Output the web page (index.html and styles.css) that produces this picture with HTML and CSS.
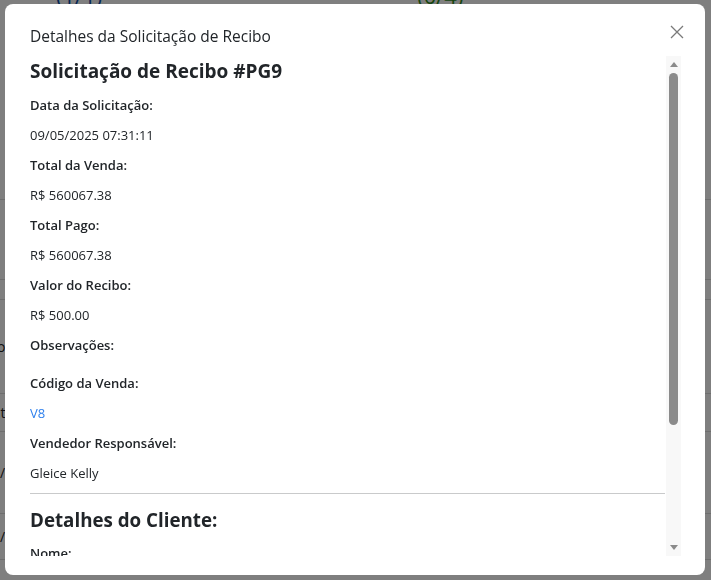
FILE: index.html
```html
<!DOCTYPE html>
<html lang="pt-BR">
<head>
<meta charset="utf-8">
<title>Detalhes da Solicitação de Recibo</title>
<link rel="stylesheet" href="styles.css">
</head>
<body>
<div class="page">
  <div class="stats">
    <span class="stat stat-blue">(1/1)</span>
    <span class="stat stat-green">(0/4)</span>
  </div>
  <div class="table">
    <div class="row h1"></div>
    <div class="row h2"></div>
    <div class="row h3"></div>
    <div class="row h4"><span class="frag frag-o">o</span></div>
    <div class="row h5"><span class="frag frag-nt">nt</span></div>
    <div class="row h6"><span class="frag">/</span></div>
    <div class="row h7"><span class="frag">/</span></div>
  </div>
</div>

<div class="backdrop">
  <div class="modal">
    <div class="modal-header">
      <h5 class="modal-title">Detalhes da Solicitação de Recibo</h5>
      <button class="close" type="button" aria-label="Fechar">
        <svg width="14" height="14" viewBox="0 0 14 14"><path d="M1 1L13 13M13 1L1 13" stroke="#7a7a7a" stroke-width="1.3" fill="none"/></svg>
      </button>
    </div>
    <div class="modal-body">
      <div class="content">
        <h4 class="req-title">Solicitação de Recibo #PG9</h4>
        <p class="label">Data da Solicitação:</p>
        <p class="value">09/05/2025 07:31:11</p>
        <p class="label">Total da Venda:</p>
        <p class="value">R$ 560067.38</p>
        <p class="label">Total Pago:</p>
        <p class="value">R$ 560067.38</p>
        <p class="label">Valor do Recibo:</p>
        <p class="value">R$ 500.00</p>
        <p class="label">Observações:</p>
        <p class="value empty"></p>
        <p class="label">Código da Venda:</p>
        <p class="value"><a class="link" href="#">V8</a></p>
        <p class="label">Vendedor Responsável:</p>
        <p class="value">Gleice Kelly</p>
        <hr class="divider">
        <h4 class="section-title">Detalhes do Cliente:</h4>
        <p class="label">Nome:</p>
        <p class="value">Cliente</p>
      </div>
      <div class="scrollbar">
        <span class="arrow-box"><span class="arrow up"></span></span>
        <span class="thumb"></span>
        <span class="track-rest"></span>
        <span class="arrow-box"><span class="arrow down"></span></span>
      </div>
    </div>
  </div>
</div>
</body>
</html>
```

FILE: styles.css
```css
* { box-sizing: border-box; }

html, body {
  margin: 0;
  height: 100%;
}

body {
  font-family: "Open Sans", "Noto Sans", sans-serif;
  color: #212529;
  background: #ffffff;
  overflow: hidden;
}

/* background page (behind the backdrop) */
.page {
  height: 580px;
  overflow: hidden;
}

.stats {
  display: flex;
  height: 14px;
  margin-top: -12px;
  font-size: 22px;
  line-height: 14px;
}

.stat-blue {
  color: #0d4fa8;
  margin-left: 56px;
}

.stat-green {
  color: #2e8b1e;
  margin-left: 315px;
}

.table {
  display: flex;
  flex-direction: column;
  margin-top: 168px;
  font-size: 14px;
}

.row {
  border-bottom: 1px solid #dcdcdc;
  display: flex;
  align-items: center;
}

.h1 { height: 30px; }
.h2 { height: 80px; }
.h3 { height: 20px; }
.h4 { height: 94px; }
.h5 { height: 38px; }
.h6 { height: 82px; }
.h7 { height: 46px; }

.frag {
  color: #222;
  margin-left: 0;
}

.frag-o { margin-left: -3px; }
.frag-nt { margin-left: -8px; }

/* modal */
.backdrop {
  position: fixed;
  inset: 0;
  background: rgba(0, 0, 0, 0.5);
  display: flex;
  align-items: flex-start;
  padding: 4px 6px 5px 5px;
}

.modal {
  width: 700px;
  height: 571px;
  background: #ffffff;
  border-radius: 8px;
  display: flex;
  flex-direction: column;
  overflow: hidden;
}

.modal-header {
  display: flex;
  justify-content: space-between;
  align-items: flex-start;
  height: 52px;
  padding: 0 21px 0 25px;
}

.modal-title {
  margin: 22px 0 0;
  font-size: 15.5px;
  line-height: 20px;
  font-weight: 500;
  color: #212529;
}

.close {
  margin-top: 21px;
  width: 14px;
  height: 14px;
  padding: 0;
  border: 0;
  background: transparent;
  display: flex;
}

.modal-body {
  display: flex;
  gap: 1px;
  height: 500px;
  padding: 0 24px 0 25px;
}

.content {
  flex: 1;
  overflow: hidden;
}

.req-title {
  margin: 3px 0 12px;
  font-size: 19px;
  line-height: 24px;
  font-weight: 700;
}

.label,
.value {
  margin: 0 0 10px;
  font-size: 13px;
  line-height: 20px;
}

.label { font-weight: 600; }

.value.empty {
  height: 8px;
  margin: 0;
}

.link {
  color: #2f80ed;
  text-decoration: none;
}

.divider {
  margin: 0 0 14px;
  border: 0;
  border-top: 1px solid #c9cacb;
  height: 0;
}

.section-title {
  margin: 0 0 11px;
  font-size: 18.75px;
  line-height: 24px;
  font-weight: 700;
}

/* scrollbar */
.scrollbar {
  width: 15px;
  display: flex;
  flex-direction: column;
  align-items: center;
  background: #f8f8f8;
}

.arrow-box {
  height: 17px;
  width: 15px;
  display: flex;
  align-items: center;
  justify-content: center;
}

.arrow {
  width: 0;
  height: 0;
  border-left: 4px solid transparent;
  border-right: 4px solid transparent;
}

.arrow.up { border-bottom: 5px solid #8a8a8a; }
.arrow.down { border-top: 5px solid #8a8a8a; }

.thumb {
  width: 9px;
  height: 352px;
  border-radius: 5px;
  background: #8b8b8b;
}

.track-rest { flex: 1; }
```
